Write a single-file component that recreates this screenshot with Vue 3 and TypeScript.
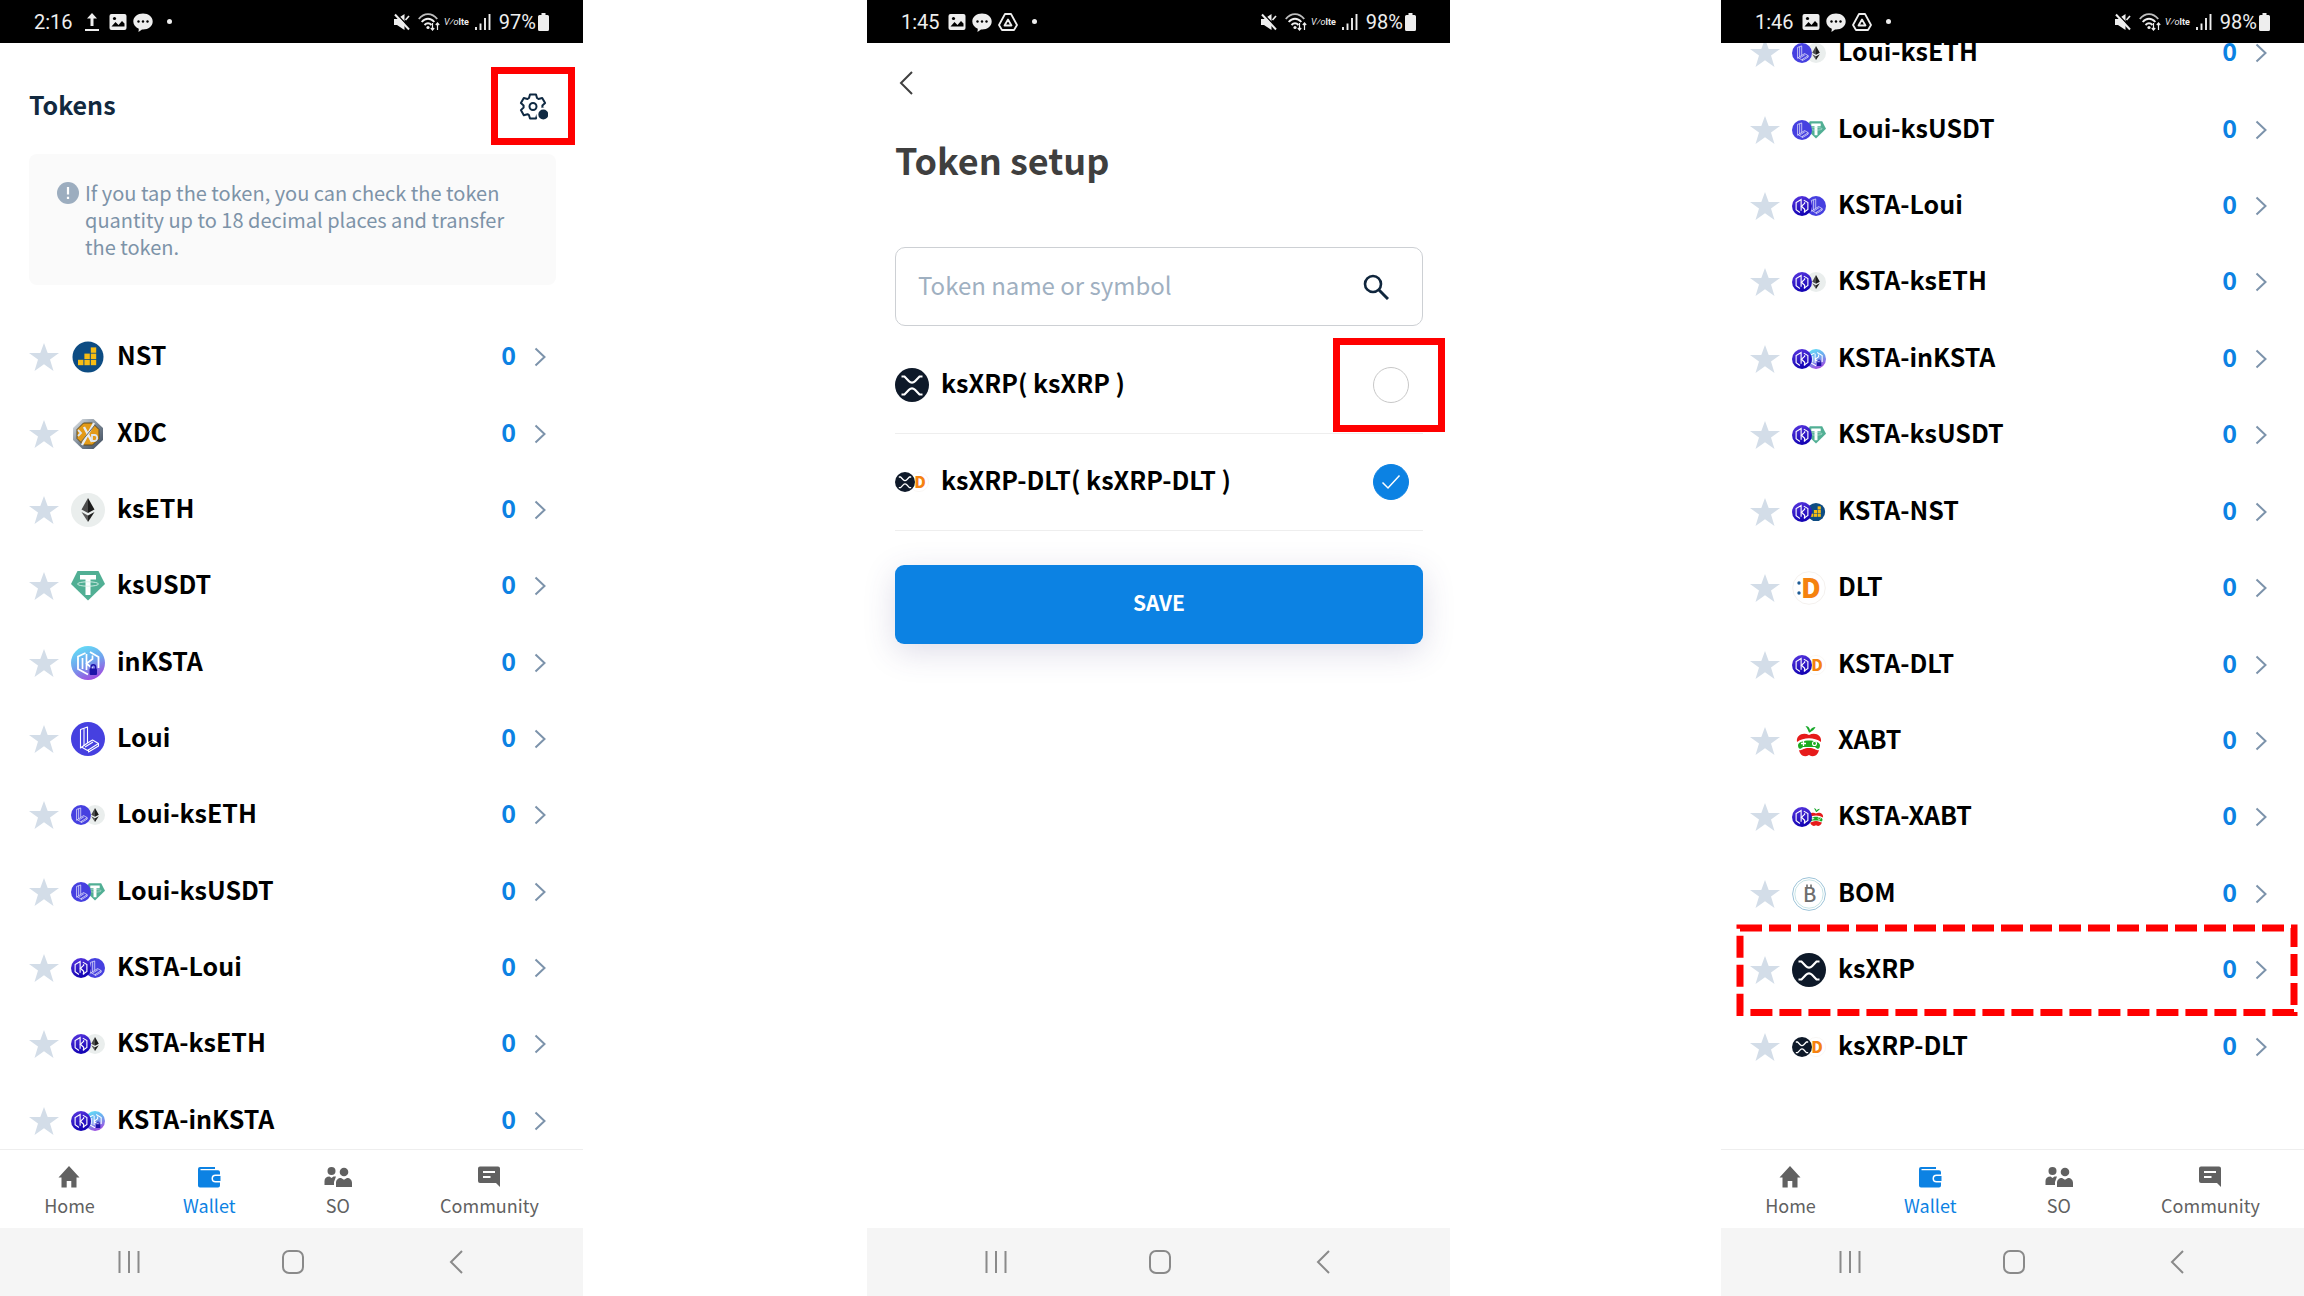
<script setup lang="ts">
import { ref } from 'vue'

type Coin = 'nst' | 'xdc' | 'eth' | 'usdt' | 'inksta' | 'loui' | 'ksta' | 'dlt' | 'xabt' | 'bom' | 'xrp'

interface Token {
  name: string
  coins: Coin[]
  marked?: boolean
}

interface SetupToken {
  id: string
  label: string
  coins: Coin[]
  checked: boolean
  marked: boolean
}

interface Status {
  time: string
  battery: string
  notices: string[]
}

const walletTokens: Token[] = [
  { name: 'NST', coins: ['nst'] },
  { name: 'XDC', coins: ['xdc'] },
  { name: 'ksETH', coins: ['eth'] },
  { name: 'ksUSDT', coins: ['usdt'] },
  { name: 'inKSTA', coins: ['inksta'] },
  { name: 'Loui', coins: ['loui'] },
  { name: 'Loui-ksETH', coins: ['loui', 'eth'] },
  { name: 'Loui-ksUSDT', coins: ['loui', 'usdt'] },
  { name: 'KSTA-Loui', coins: ['ksta', 'loui'] },
  { name: 'KSTA-ksETH', coins: ['ksta', 'eth'] },
  { name: 'KSTA-inKSTA', coins: ['ksta', 'inksta'] },
]

const scrolledTokens: Token[] = [
  ...walletTokens.slice(6),
  { name: 'KSTA-ksUSDT', coins: ['ksta', 'usdt'] },
  { name: 'KSTA-NST', coins: ['ksta', 'nst'] },
  { name: 'DLT', coins: ['dlt'] },
  { name: 'KSTA-DLT', coins: ['ksta', 'dlt'] },
  { name: 'XABT', coins: ['xabt'] },
  { name: 'KSTA-XABT', coins: ['ksta', 'xabt'] },
  { name: 'BOM', coins: ['bom'] },
  { name: 'ksXRP', coins: ['xrp'], marked: true },
  { name: 'ksXRP-DLT', coins: ['xrp', 'dlt'] },
]

const setupTokens = ref<SetupToken[]>([
  { id: 'ksxrp', label: 'ksXRP( ksXRP )', coins: ['xrp'], checked: false, marked: true },
  { id: 'ksxrp-dlt', label: 'ksXRP-DLT( ksXRP-DLT )', coins: ['xrp', 'dlt'], checked: true, marked: false },
])

const search = ref('')

const screens: { id: string; kind: 'wallet' | 'setup' | 'scrolled'; status: Status }[] = [
  { id: 'tokens', kind: 'wallet', status: { time: '2:16', battery: '97%', notices: ['upload', 'photo', 'chat'] } },
  { id: 'setup', kind: 'setup', status: { time: '1:45', battery: '98%', notices: ['photo', 'chat', 'drive'] } },
  { id: 'result', kind: 'scrolled', status: { time: '1:46', battery: '98%', notices: ['photo', 'chat', 'drive'] } },
]

const tabs = [
  { label: 'Home', icon: 'home' },
  { label: 'Wallet', icon: 'wallet' },
  { label: 'SO', icon: 'people' },
  { label: 'Community', icon: 'community' },
]
</script>

<template>
  <div class="board">
    <svg class="sprite" width="0" height="0" aria-hidden="true">
      <defs>
        <linearGradient id="g-ksta" x1="0" y1="0" x2="0.3" y2="1">
          <stop offset="0" stop-color="#5a38e0" />
          <stop offset="1" stop-color="#1404b4" />
        </linearGradient>
        <linearGradient id="g-inksta" x1="0.2" y1="0" x2="0.6" y2="1">
          <stop offset="0" stop-color="#63e0f7" />
          <stop offset="0.5" stop-color="#6fa6ee" />
          <stop offset="1" stop-color="#a04be0" />
        </linearGradient>
        <linearGradient id="g-xdc" x1="0" y1="0" x2="1" y2="1">
          <stop offset="0" stop-color="#e9edf0" />
          <stop offset="0.5" stop-color="#7b8794" />
          <stop offset="1" stop-color="#3d4a5c" />
        </linearGradient>
      </defs>
      <symbol id="coin-nst" viewBox="0 0 34 34">
        <circle cx="17" cy="17" r="15.5" fill="#0d4c83" />
        <g fill="#f8bd13">
          <rect x="7" y="19.8" width="5.4" height="5.4" />
          <rect x="13.4" y="19.8" width="5.4" height="5.4" />
          <rect x="19.8" y="19.8" width="5.4" height="5.4" />
          <rect x="13.4" y="13.6" width="5.4" height="5.4" />
          <rect x="19.8" y="13.6" width="5.4" height="5.4" />
          <rect x="19.8" y="7.4" width="5.4" height="5.4" />
        </g>
      </symbol>
      <symbol id="coin-xdc" viewBox="0 0 34 34">
        <path d="M11.500 2h11L32 11v12l-9.500 9h-11L2 23V11z" fill="url(#g-xdc)" />
        <path d="M12.500 6h9l6.500 6.500v9L21.500 28h-9L6 21.500v-9z" fill="#e39a17" stroke="#5c4a22" stroke-width="1" />
        <path d="M23 6 11 28M13 10l8 15" stroke="#e8edf2" stroke-width="2.400" />
        <path d="m7 13 3 3-3 3M21 18h2.500c4 0 3 6 0 6H21z" fill="none" stroke="#dfe6ee" stroke-width="1.800" />
        <path d="M10 25 24 8" stroke="#5b6673" stroke-width="1" />
      </symbol>
      <symbol id="coin-eth" viewBox="0 0 34 34">
        <circle cx="17" cy="17" r="17" fill="#eaeeed" />
        <path d="m17 5-6.500 11.500L17 20z" fill="#4c4c4c" />
        <path d="m17 5 6.500 11.500L17 20z" fill="#1c1c1c" />
        <path d="m10.500 19 6.500 3.500V29z" fill="#5a5a5a" />
        <path d="M23.500 19 17 22.500V29z" fill="#202020" />
      </symbol>
      <symbol id="coin-usdt" viewBox="0 0 34 34">
        <path d="M6.500 2h21L34 15 17 31.500 0 15z" fill="#51af94" />
        <path d="M9 6h16v4.600h-5.500V26h-5V10.600H9z" fill="#fff" />
        <ellipse cx="17" cy="15" rx="10.500" ry="2.200" fill="none" stroke="#d9efe8" stroke-width="0.900" />
      </symbol>
      <symbol id="coin-ksta" viewBox="0 0 34 34">
        <circle cx="17" cy="17" r="17" fill="url(#g-ksta)" />
        <path d="M13.500 28 7 23.500V11l8.500-5v19M20 7l7 4v12l-7 4.500" fill="none" stroke="#fff" stroke-width="1.900" />
        <path d="M21.500 10.500v2l-5.500 5 5.500 5V28" fill="none" stroke="#fff" stroke-width="2" />
      </symbol>
      <symbol id="coin-inksta" viewBox="0 0 34 34">
        <circle cx="17" cy="17" r="17" fill="url(#g-inksta)" />
        <path d="M17 28.500 7 23V10.500L14.500 7M19 6l8.500 5v11" fill="none" stroke="#fff" stroke-width="1.800" />
        <path d="M11.500 12v11M15.500 8v16M21.500 9.500v3.500l-6 4.500 6 5" fill="none" stroke="#fff" stroke-width="1.700" />
        <path d="M20 23v-2a2.300 2.300 0 0 1 4.600 0v2" fill="none" stroke="#1d12a8" stroke-width="1.400" />
        <rect x="18.600" y="22.500" width="7.400" height="6.500" rx="1" fill="#1d12a8" />
      </symbol>
      <symbol id="coin-loui" viewBox="0 0 34 34">
        <circle cx="17" cy="17" r="17" fill="#4640e0" />
        <g fill="none" stroke="#fff" stroke-width="1.100" stroke-linejoin="round">
          <path d="M9.500 7.500 16.500 5v16l-7 5z" />
          <path d="M13 6.500V24" />
          <path d="m16.500 21 5-3 6 3.500-11 7-6-3.500" />
          <path d="m14 25 8-5M27.500 21.500v2.500L17.500 30v-2.500" />
        </g>
      </symbol>
      <symbol id="coin-dlt" viewBox="0 0 34 34">
        <circle cx="17" cy="17" r="16.300" fill="#fff" stroke="#f4f1ee" stroke-width="1" />
        <circle cx="7" cy="12" r="1.700" fill="#1f5c96" />
        <circle cx="7" cy="22" r="1.700" fill="#1f5c96" />
      </symbol>
      <symbol id="coin-xabt" viewBox="0 0 34 34">
        <path d="M17 8.500c-1-2.500-2-4.500-3.500-6.500 3.500 0 4.500 3 4.500 4.500 1-2 3-3.500 5.500-3.500-1 3-3.500 3.500-5.500 5.500z" fill="#18a82a" />
        <path d="M5 18C4 11 11 8 17 11c6-3 13 0 12 7-7-5-17-5-24 0z" fill="#e61b1b" />
        <path d="M6 21c1-6 21-6 22 0 0 4-2 5-5 2H11c-3 3-5 2-5-2z" fill="#1cab22" />
        <path d="M9 19.500h5M11.500 17v5" stroke="#fff" stroke-width="1.300" />
        <circle cx="22.500" cy="19.500" r="2" fill="none" stroke="#fff" stroke-width="1.100" />
        <path d="M7 26c3 1 4-2 10-2s7 3 10 2c-1 5-5 8-10 5-5 3-9 0-10-5z" fill="#e61b1b" />
      </symbol>
      <symbol id="coin-bom" viewBox="0 0 34 34">
        <circle cx="17" cy="17" r="16.400" fill="#fff" stroke="#9cc3d8" stroke-width="1" />
        <circle cx="17" cy="17" r="14.200" fill="#fff" stroke="#b9dde0" stroke-width="0.800" />
        <path d="M15 7.500v3.500M19 7.500v3.500" stroke="#6e6e6e" stroke-width="1.600" />
      </symbol>
      <symbol id="coin-xrp" viewBox="0 0 34 34">
        <circle cx="17" cy="17" r="17" fill="#0e1929" />
        <g fill="none" stroke="#fff" stroke-width="2.200">
          <path d="M6.500 8.500h3l4.500 4.700c1.800 1.800 4.200 1.800 6 0l4.500-4.700h3" />
          <path d="M6.500 26.500h3l4.500-4.700c1.800-1.800 4.200-1.800 6 0l4.500 4.700h3" />
        </g>
      </symbol>

      <symbol id="st-upload" viewBox="0 0 18 20">
        <path d="M9 1 4 6.500h3.500V14h3V6.500H14zM2 17h14v2H2z" fill="#eee" />
      </symbol>
      <symbol id="st-photo" viewBox="0 0 18 20">
        <rect x="0.500" y="2" width="17" height="16" rx="2" fill="#eee" />
        <circle cx="5.500" cy="6.500" r="1.600" fill="#000" />
        <path d="m2.500 14.500 4-4.500 3 3 3.500-4 2.500 2.500v3z" fill="#000" />
      </symbol>
      <symbol id="st-chat" viewBox="0 0 20 20">
        <path d="M10 1.500c5.500 0 9.700 3.500 9.700 8s-4.200 8-9.700 8l-1 0-3.500 2.500.3-3.300C2.500 15.300.3 12.700.3 9.500c0-4.500 4.200-8 9.700-8z" fill="#eee" />
        <circle cx="5.500" cy="9.500" r="1.200" fill="#000" />
        <circle cx="10" cy="9.500" r="1.200" fill="#000" />
        <circle cx="14.500" cy="9.500" r="1.200" fill="#000" />
      </symbol>
      <symbol id="st-drive" viewBox="0 0 20 20">
        <path d="M7 2h6l6 11-3 5H4l-3-5z" fill="none" stroke="#eee" stroke-width="1.800" stroke-linejoin="round" />
        <path d="m10 7.500 3.500 6h-7z" fill="none" stroke="#eee" stroke-width="1.800" stroke-linejoin="round" />
      </symbol>
    </svg>

    <section v-for="screen in screens" :key="screen.id" class="phone">
      <div class="status">
        <span class="clock">{{ screen.status.time }}</span>
        <svg v-for="n in screen.status.notices" :key="n" class="notice" :class="n"><use :href="'#st-' + n" /></svg>
        <span class="more-dot"></span>
        <svg class="mute" viewBox="0 0 16 18">
          <path d="M0 6h3L10.500 1v16L3 12H0z" fill="#eee" />
          <path d="M2 0.500 16.500 15.500" stroke="#000" stroke-width="1.600" />
          <path d="M1 1.500 15 16.500" stroke="#eee" stroke-width="2" />
          <path d="M11.500 7 15 3" stroke="#eee" stroke-width="1.600" />
        </svg>
        <svg class="wifi" viewBox="0 0 22 18">
          <g fill="none" stroke="#eee" stroke-width="1.900">
            <path d="M0.800 6C6-0.500 14-0.500 19.200 6" opacity="0.800" />
            <path d="M3.700 9c3.600-4.300 9-4.300 12.600 0" />
            <path d="M6.500 12c2.200-2.400 4.800-2.400 7 0" />
          </g>
          <circle cx="10" cy="14.500" r="1.600" fill="#eee" />
          <path d="M14.500 10v6.500M12.800 15l1.700 2 1.700-2M19.500 17v-6.500M17.800 12l1.700-2 1.700 2" fill="none" stroke="#eee" stroke-width="1.200" />
        </svg>
        <span class="volte"><i>V⁄o</i><b>lte</b></span>
        <svg class="signal" viewBox="0 0 16 18">
          <path d="M1 14v3M5.500 10.500V17M10 5v12M14.500 1v16" stroke="#eee" stroke-width="1.900" />
        </svg>
        <span class="charge">{{ screen.status.battery }}</span>
        <svg class="battery" viewBox="0 0 11 18">
          <path d="M3.500 0h4v2H9.500A1.500 1.500 0 0 1 11 3.500v13A1.500 1.500 0 0 1 9.500 18h-8A1.500 1.500 0 0 1 0 16.500v-13A1.500 1.500 0 0 1 1.500 2h2z" fill="#eee" />
        </svg>
      </div>

      <main class="content" :class="screen.kind">
        <template v-if="screen.kind === 'wallet'">
          <header class="heading">
            <h1>Tokens</h1>
            <button type="button" class="gear" aria-label="Token settings">
              <svg viewBox="0 0 30 30">
                <g transform="translate(15 15.500)">
                  <path d="M-4-8.500-3-12H3l1 3.500 1.500 1 3.700-1 2.900 5.100L9.400-1V1l2.700 2.600-2.900 5.100-3.700-1-1.500 1L3 12h-6l-1-3.300-1.500-1-3.700 1-2.900-5.100L-9.400 1V-1l-2.700-2.400 2.900-5.100 3.700 1z" fill="none" stroke="#0f2942" stroke-width="2" stroke-linejoin="round" />
                  <circle r="3.500" fill="none" stroke="#0f2942" stroke-width="2" />
                </g>
                <circle cx="25.300" cy="23.500" r="6" fill="#0f2942" stroke="#fff" stroke-width="2" />
              </svg>
            </button>
          </header>
          <div class="notice-card">
            <svg viewBox="0 0 22 22">
              <circle cx="11" cy="11" r="11" fill="#9cadbf" />
              <path d="M11 5v7.500M11 14.800v2.200" stroke="#fff" stroke-width="2.200" />
            </svg>
            <p>If you tap the token, you can check the token quantity up to 18 decimal places and transfer the token.</p>
          </div>
        </template>

        <ul v-if="screen.kind !== 'setup'" class="tokens">
          <li v-for="t in screen.kind === 'wallet' ? walletTokens : scrolledTokens" :key="t.name">
            <button type="button" class="star" :aria-label="'Favourite ' + t.name">
              <svg viewBox="0 0 30 28"><path d="M15 0l3.700 10H30l-9 6.500L24.500 28 15 21.200 5.500 28 9 16.500 0 10h11.300z" fill="#d3dde8" /></svg>
            </button>
            <a href="#">
              <span class="coins" :class="{ pair: t.coins.length > 1 }">
                <svg v-for="c in t.coins" :key="c" viewBox="0 0 34 34">
                  <use :href="'#coin-' + c" />
                  <text v-if="c === 'dlt'" x="9" y="27" class="letter-d">D</text>
                  <text v-if="c === 'bom'" x="11" y="25" class="letter-b">B</text>
                </svg>
              </span>
              <span class="name">{{ t.name }}</span>
              <span class="amount">0</span>
              <svg class="chevron" viewBox="0 0 12 20"><path d="m1.500 1.500 9 8.500-9 8.500" fill="none" stroke="#7c93ab" stroke-width="2" /></svg>
            </a>
            <svg v-if="t.marked" class="dashes" aria-hidden="true"><rect width="100%" height="100%" /></svg>
          </li>
        </ul>

        <template v-if="screen.kind === 'setup'">
          <button type="button" class="back" aria-label="Back">
            <svg viewBox="0 0 14 24"><path d="M13 1 2 12l11 11" fill="none" stroke="#3f3f3f" stroke-width="2" /></svg>
          </button>
          <h1>Token setup</h1>
          <form class="search" @submit.prevent>
            <input v-model="search" type="text" aria-label="Search tokens" placeholder="Token name or symbol" />
            <button type="submit" aria-label="Search">
              <svg viewBox="0 0 26 26">
                <circle cx="10" cy="10" r="8" fill="none" stroke="#10263d" stroke-width="2.600" />
                <path d="m16 16 9 9" stroke="#10263d" stroke-width="3" />
              </svg>
            </button>
          </form>
          <label v-for="t in setupTokens" :key="t.id" class="option">
            <span class="coins" :class="{ pair: t.coins.length > 1 }">
              <svg v-for="c in t.coins" :key="c" viewBox="0 0 34 34">
                <use :href="'#coin-' + c" />
                <text v-if="c === 'dlt'" x="9" y="27" class="letter-d">D</text>
              </svg>
            </span>
            <span class="name">{{ t.label }}</span>
            <span class="tick" :class="{ ringed: t.marked }">
              <input v-model="t.checked" type="checkbox" />
              <svg v-if="t.checked" viewBox="0 0 36 36"><path d="m9.500 18.500 5.500 5.500L26.500 11.500" fill="none" stroke="#fff" stroke-width="1.500" /></svg>
            </span>
          </label>
          <button type="button" class="save">SAVE</button>
        </template>
      </main>

      <nav v-if="screen.kind !== 'setup'" class="tabs">
        <a v-for="tab in tabs" :key="tab.label" href="#" :class="{ active: tab.icon === 'wallet' }">
          <svg v-if="tab.icon === 'home'" viewBox="0 0 28 24"><path d="M14 1 3.500 12.500H6.500V22.500h5.200V16h4.600v6.500h5.200v-10h3z" /></svg>
          <svg v-else-if="tab.icon === 'wallet'" viewBox="0 0 28 24">
            <path d="M5 2h15v2H5.500v1.200H23a2 2 0 0 1 2 2v2.300h-4.500a4 4 0 0 0 0 8H25v3a2 2 0 0 1-2 2H5a2 2 0 0 1-2-2V4a2 2 0 0 1 2-2z" />
            <path d="M20.500 11H25.500v5h-5a2.500 2.500 0 0 1 0-5z" />
          </svg>
          <svg v-else-if="tab.icon === 'people'" viewBox="0 0 28 24">
            <circle cx="7.500" cy="6" r="4" />
            <circle cx="20" cy="7" r="4.300" />
            <path d="M.5 20v-4c0-3 2-4.500 5-4.500l2 1.500 2-1.500h2.500L10 17v3zM12 22v-4c0-3 2-5 5-5l3 1.800 3-1.800c3 0 5 2 5 5v4z" />
          </svg>
          <svg v-else viewBox="0 0 28 24">
            <path fill-rule="evenodd" d="M5 1.500h18a2 2 0 0 1 2 2V22l-4-4H5a2 2 0 0 1-2-2V3.500a2 2 0 0 1 2-2zM8 6v2h12V6zM8 11v2h7.500v-2z" />
          </svg>
          <span>{{ tab.label }}</span>
        </a>
      </nav>

      <div class="system">
        <button type="button" aria-label="Recent apps"><svg viewBox="0 0 22 24"><path d="M1.500 1v22M11 1v22M20.500 1v22" /></svg></button>
        <button type="button" aria-label="Home screen"><svg viewBox="0 0 22 24"><rect x="1" y="1" width="20" height="22" rx="6" /></svg></button>
        <button type="button" aria-label="Go back"><svg viewBox="0 0 22 24"><path d="M17 1 6 12l11 11" /></svg></button>
      </div>
    </section>
  </div>
</template>

<style>
body {
  background: #fff;
}
</style>

<style scoped>
*,
*::after {
  box-sizing: border-box;
}
.board {
  display: grid;
  grid-template-columns: 583fr 284fr 583fr 271fr 583fr;
  min-height: 100vh;
  background: #fff;
  color: #000;
  font-family: 'Noto Sans CJK KR', 'Noto Sans', sans-serif;
  overflow: hidden;
}
.sprite {
  position: absolute;
}
.phone {
  display: flex;
  flex-direction: column;
  min-width: 0;
  grid-row: 1;
}
.phone:nth-of-type(1) {
  grid-column: 1;
}
.phone:nth-of-type(2) {
  grid-column: 3;
}
.phone:nth-of-type(3) {
  grid-column: 5;
}
svg {
  display: block;
  flex: none;
}
button {
  padding: 0;
  border: 0;
  background: none;
  font: inherit;
  cursor: pointer;
}
a {
  color: inherit;
  text-decoration: none;
}
h1,
p,
ul {
  margin: 0;
  padding: 0;
}

/* Status bar */
.status {
  display: flex;
  align-items: center;
  flex: none;
  height: 43px;
  padding: 0 34px;
  background: #000;
  color: #eee;
  font: 20px/24px Roboto, sans-serif;
}
.notice {
  width: 18px;
  height: 20px;
  margin-left: 8px;
}
.notice.upload {
  margin-left: 10px;
}
.notice.chat,
.notice.drive {
  width: 20px;
  margin-left: 6px;
}
.more-dot {
  width: 5px;
  height: 5px;
  margin: 0 auto 0 14px;
  border-radius: 50%;
  background: #eee;
}
.mute {
  width: 16px;
  height: 18px;
}
.wifi {
  width: 22px;
  height: 18px;
  margin-left: 8px;
}
.volte {
  display: flex;
  margin-left: 4px;
  font-size: 9px;
}
.signal {
  width: 16px;
  height: 18px;
  margin-left: 6px;
}
.charge {
  margin-left: 8px;
}
.battery {
  width: 11px;
  height: 18px;
  margin-left: 2px;
}

.content {
  display: flex;
  flex-direction: column;
  flex: 1;
  overflow: hidden;
}

/* Wallet heading */
.heading {
  display: flex;
  align-items: center;
  justify-content: space-between;
  margin-top: 24px;
  padding: 0 8px 0 29px;
}
.heading h1 {
  padding-bottom: 4px;
  color: #12293f;
  font-size: 25px;
  font-weight: 700;
  line-height: 38px;
}
.gear {
  display: flex;
  align-items: center;
  justify-content: center;
  width: 84px;
  height: 78px;
  border: 7px solid #f00;
}
.gear svg {
  width: 30px;
  height: 30px;
}
.notice-card {
  display: flex;
  gap: 6px;
  min-height: 130px;
  margin: 9px 27px 34px 29px;
  padding: 25px 28px;
  border-radius: 8px;
  background: #fafafa;
  color: #7d93a8;
}
.notice-card svg {
  width: 22px;
  height: 22px;
  margin-top: 3px;
}
.notice-card p {
  font-size: 20px;
  line-height: 27px;
}

/* Token list */
.tokens {
  display: flex;
  flex-direction: column;
  flex: 1;
  list-style: none;
}
.wallet .tokens {
  margin-bottom: -10px;
}
.scrolled .tokens {
  margin-top: -28px;
  margin-bottom: 64px;
}
.tokens li {
  position: relative;
  display: flex;
  align-items: center;
  flex: 1 0 48px;
  padding: 0 37px 0 29px;
}
.star svg {
  width: 30px;
  height: 28px;
}
.tokens a {
  display: flex;
  align-items: center;
  flex: 1;
  margin-left: 12px;
}
.coins {
  display: flex;
  flex: none;
  width: 34px;
}
.coins svg {
  position: relative;
  z-index: 1;
  width: 34px;
  height: 34px;
}
.pair svg {
  width: 20px;
  height: 20px;
}
.pair svg + svg {
  z-index: 0;
  margin-left: -6px;
}
.name,
.amount {
  padding-bottom: 6px;
  font-size: 25px;
  font-weight: 700;
  line-height: 38px;
  white-space: nowrap;
}
.name {
  flex: 1;
  margin-left: 12px;
}
.amount {
  color: #0c82e3;
}
.chevron {
  width: 12px;
  height: 20px;
  margin-left: 18px;
}
.dashes {
  position: absolute;
  top: -4px;
  left: 19px;
  width: calc(100% - 29px);
  height: calc(100% + 8px);
  overflow: visible;
  pointer-events: none;
}
.dashes rect {
  fill: none;
  stroke: #f00;
  stroke-width: 7px;
  stroke-dasharray: 22 7;
}
.letter-d {
  fill: #f5820f;
  font-size: 27px;
  font-weight: 900;
}
.letter-b {
  fill: #6e6e6e;
  font-size: 20px;
  font-weight: 500;
}

/* Token setup */
.setup {
  padding: 28px 27px 0 28px;
  overflow: visible;
}
.back {
  align-self: flex-start;
  margin-left: 4px;
}
.back svg {
  width: 14px;
  height: 24px;
}
.setup h1 {
  margin-top: 37px;
  color: #3f3f3f;
  font-size: 36px;
  font-weight: 700;
  line-height: 54px;
}
.search {
  display: flex;
  align-items: center;
  height: 79px;
  margin-top: 61px;
  padding: 0 33px 0 22px;
  border: 1px solid #cdd0d4;
  border-radius: 10px;
}
.search input {
  flex: 1;
  min-width: 0;
  padding: 0 0 3px;
  border: 0;
  outline: 0;
  background: none;
  color: #12293f;
  font: 24px/38px 'Noto Sans CJK KR', 'Noto Sans', sans-serif;
}
.search input::placeholder {
  color: #9fb0c1;
  opacity: 1;
}
.search svg {
  width: 26px;
  height: 26px;
}
.option {
  display: flex;
  align-items: center;
  height: 97px;
  padding-right: 14px;
  border-bottom: 1px solid #eee;
}
.search + .option {
  margin-top: 11px;
}
.tick {
  position: relative;
  flex: none;
  width: 36px;
  height: 36px;
}
.tick input {
  display: block;
  width: 36px;
  height: 36px;
  margin: 0;
  border: 1px solid #c8c8c8;
  border-radius: 50%;
  background: #fff;
  appearance: none;
}
.tick input:checked {
  border-color: #0c82e3;
  background: #0c82e3;
}
.tick svg {
  position: absolute;
  inset: 0;
  pointer-events: none;
}
.ringed::after {
  content: '';
  position: absolute;
  top: 50%;
  left: 50%;
  width: 112px;
  height: 94px;
  margin: -47px 0 0 -58px;
  border: 7px solid #f00;
  pointer-events: none;
}
.save {
  height: 79px;
  margin-top: 34px;
  padding-bottom: 5px;
  border-radius: 9px;
  background: #0c82e3;
  box-shadow: 0 8px 32px rgba(70, 60, 130, 0.18);
  color: #fff;
  font-size: 21px;
  font-weight: 700;
  line-height: 32px;
}

/* Bottom bars */
.tabs {
  display: flex;
  justify-content: space-around;
  flex: none;
  height: 79px;
  padding-top: 15px;
  border-top: 1px solid #eee;
  background: #fff;
  color: #616161;
}
.tabs a {
  display: flex;
  flex-direction: column;
  align-items: center;
  gap: 2px;
  font-size: 18px;
  line-height: 28px;
}
.tabs svg {
  width: 28px;
  height: 24px;
  fill: currentColor;
}
.tabs .active {
  color: #0c82e3;
}
.system {
  display: flex;
  align-items: center;
  justify-content: space-between;
  flex: none;
  height: 68px;
  padding: 0 116px 0 118px;
  background: #f5f5f5;
}
.system svg {
  width: 22px;
  height: 24px;
  fill: none;
  stroke: #8a8a8a;
  stroke-width: 2px;
}
</style>
